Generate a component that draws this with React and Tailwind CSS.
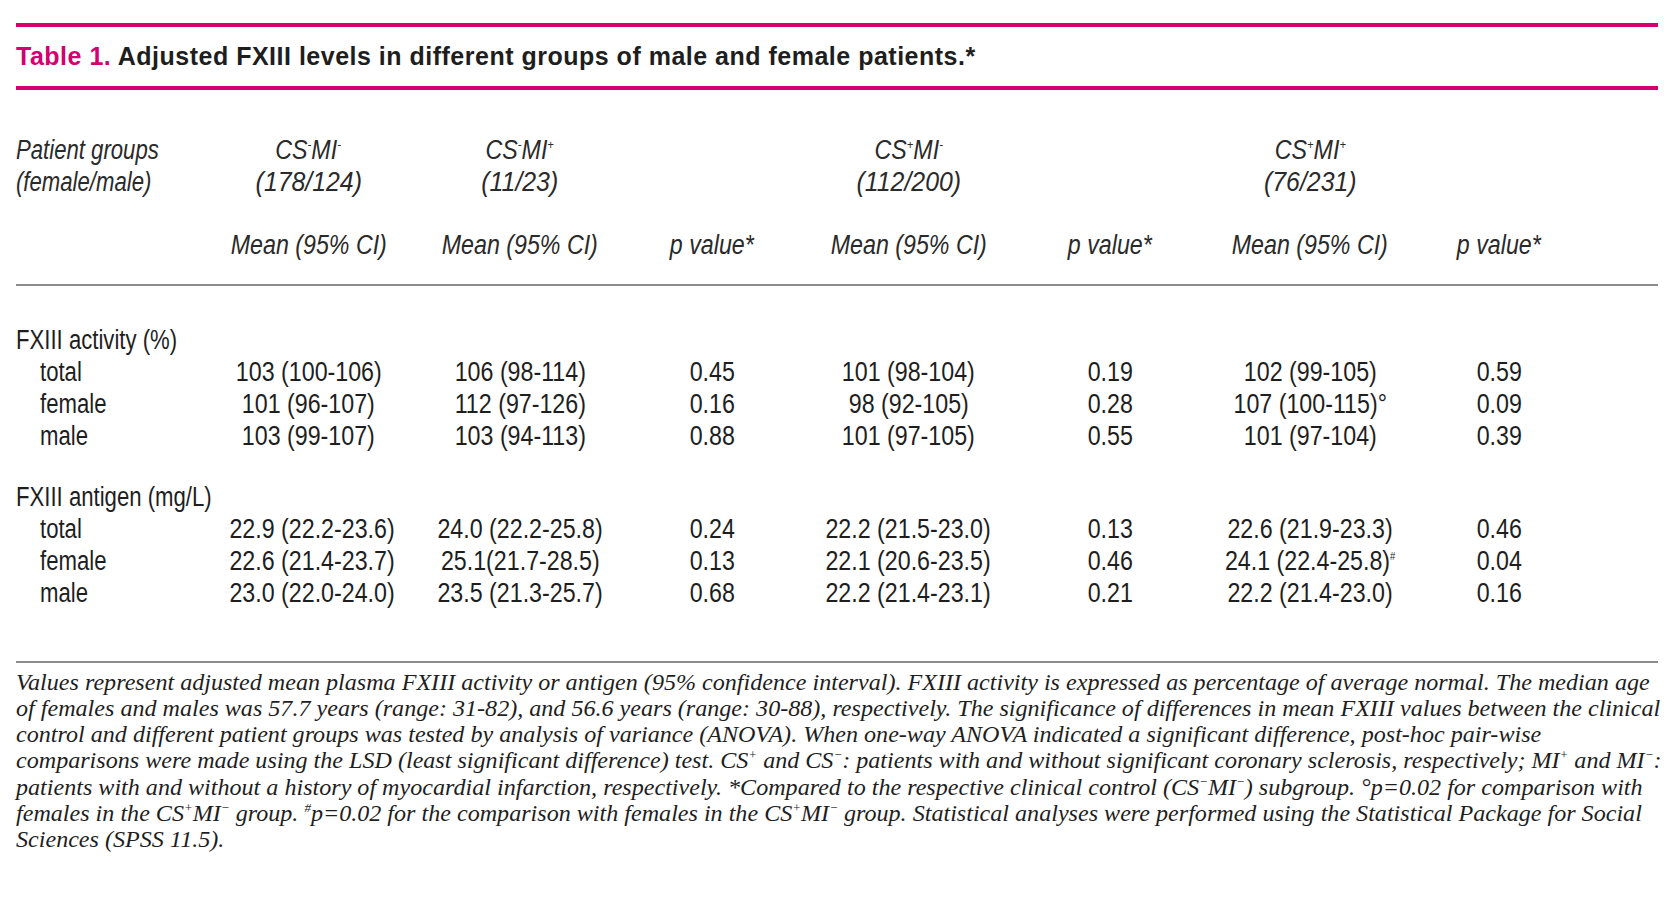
import React from "react";

const GRID =
  "grid grid-cols-[200px_185px_238px_146px_247px_156px_244px_134px_1fr] leading-[32px]";

const S = ({ c }) => (
  <sup className="text-[13px] top-[-0.7em]">{c}</sup>
);

const C = ({ children }) => (
  <div className="text-center whitespace-nowrap">
    <span className="inline-block scale-x-[0.86] origin-center">{children}</span>
  </div>
);

const N = ({ children }) => (
  <div className="text-center whitespace-nowrap">
    <span className="inline-block scale-x-[0.92] origin-center">{children}</span>
  </div>
);

const L = ({ children, cls = "" }) => (
  <div className={`whitespace-nowrap ${cls}`}>
    <span className="inline-block scale-x-[0.82] origin-left">{children}</span>
  </div>
);

const Grp = ({ a, b }) => (
  <span>
    CS<S c={a} />MI<S c={b} />
  </span>
);

const activity = [
  ["total", "103 (100-106)", "106 (98-114)", "0.45", "101 (98-104)", "0.19", "102 (99-105)", "0.59"],
  ["female", "101 (96-107)", "112 (97-126)", "0.16", "98 (92-105)", "0.28", "107 (100-115)°", "0.09"],
  ["male", "103 (99-107)", "103 (94-113)", "0.88", "101 (97-105)", "0.55", "101 (97-104)", "0.39"],
];

const antigen = [
  ["total", "22.9 (22.2-23.6)", "24.0 (22.2-25.8)", "0.24", "22.2 (21.5-23.0)", "0.13", "22.6 (21.9-23.3)", "0.46"],
  ["female", "22.6 (21.4-23.7)", "25.1(21.7-28.5)", "0.13", "22.1 (20.6-23.5)", "0.46", "24.1 (22.4-25.8)#", "0.04"],
  ["male", "23.0 (22.0-24.0)", "23.5 (21.3-25.7)", "0.68", "22.2 (21.4-23.1)", "0.21", "22.2 (21.4-23.0)", "0.16"],
];

function Cell({ v }) {
  if (v.endsWith("#")) {
    return (
      <C>
        {v.slice(0, -1)}
        <sup className="text-[11px] top-[-0.9em]">#</sup>
      </C>
    );
  }
  return <C>{v}</C>;
}

function Block({ title, rows }) {
  return (
    <div>
      <div className={GRID}>
        <L cls="col-span-9">{title}</L>
      </div>
      {rows.map((r) => (
        <div key={r[0]} className={GRID}>
          <L cls="pl-[24px]">{r[0]}</L>
          {r.slice(1).map((v, i) => (
            <Cell key={i} v={v} />
          ))}
          <div />
        </div>
      ))}
    </div>
  );
}

export default function App() {
  return (
    <div className="w-[1674px] h-[904px] bg-white px-[16px] pt-[23px] text-[#1e1e1e]">
      <div className="h-[4px] bg-[#d4006f]" />
      <div className="h-[59px] leading-[59px] text-[25px] font-bold tracking-[0.5px] font-['Liberation_Sans',sans-serif] whitespace-nowrap">
        <span className="text-[#d4006f]">Table 1.</span> Adjusted FXIII levels in different groups of male and female patients.*
      </div>
      <div className="h-[4px] bg-[#d4006f]" />

      <div className="font-['Liberation_Sans',sans-serif] text-[27px]">
        <div className="mt-[43.5px] italic text-[#2a2a2a]">
          <div className={GRID}>
            <L>Patient groups</L>
            <C><Grp a="-" b="-" /></C>
            <C><Grp a="-" b="+" /></C>
            <div />
            <C><Grp a="+" b="-" /></C>
            <div />
            <C><Grp a="+" b="+" /></C>
            <div />
            <div />
          </div>
          <div className={GRID}>
            <L>(female/male)</L>
            <N>(178/124)</N>
            <N>(11/23)</N>
            <div />
            <N>(112/200)</N>
            <div />
            <N>(76/231)</N>
            <div />
            <div />
          </div>
          <div className={`${GRID} mt-[31px]`}>
            <div />
            <C>Mean (95% CI)</C>
            <C>Mean (95% CI)</C>
            <C>p value*</C>
            <C>Mean (95% CI)</C>
            <C>p value*</C>
            <C>Mean (95% CI)</C>
            <C>p value*</C>
            <div />
          </div>
        </div>

        <div className="mt-[23px] h-[2px] bg-[#8c8c8c]" />

        <div className="mt-[38.5px]">
          <Block title="FXIII activity (%)" rows={activity} />
        </div>
        <div className="mt-[29px]">
          <Block title="FXIII antigen (mg/L)" rows={antigen} />
        </div>

        <div className="mt-[51.5px] h-[2px] bg-[#8c8c8c]" />
      </div>

      <div className="mt-[6px] font-['Liberation_Serif',serif] italic text-[24.1px] leading-[26.3px] text-[#1e1e1e] whitespace-nowrap">
        <div>Values represent adjusted mean plasma FXIII activity or antigen (95% confidence interval). FXIII activity is expressed as percentage of average normal. The median age</div>
        <div>of females and males was 57.7 years (range: 31-82), and 56.6 years (range: 30-88), respectively. The significance of differences in mean FXIII values between the clinical</div>
        <div>control and different patient groups was tested by analysis of variance (ANOVA). When one-way ANOVA indicated a significant difference, post-hoc pair-wise</div>
        <div>
          comparisons were made using the LSD (least significant difference) test. CS<S c="+" /> and CS<S c="−" />: patients with and without significant coronary sclerosis, respectively; MI<S c="+" /> and MI<S c="−" />:
        </div>
        <div>
          patients with and without a history of myocardial infarction, respectively. *Compared to the respective clinical control (CS<S c="−" />MI<S c="−" />) subgroup. °p=0.02 for comparison with
        </div>
        <div>
          females in the CS<S c="+" />MI<S c="−" /> group. <S c="#" />p=0.02 for the comparison with females in the CS<S c="+" />MI<S c="−" /> group. Statistical analyses were performed using the Statistical Package for Social
        </div>
        <div>Sciences (SPSS 11.5).</div>
      </div>
    </div>
  );
}
